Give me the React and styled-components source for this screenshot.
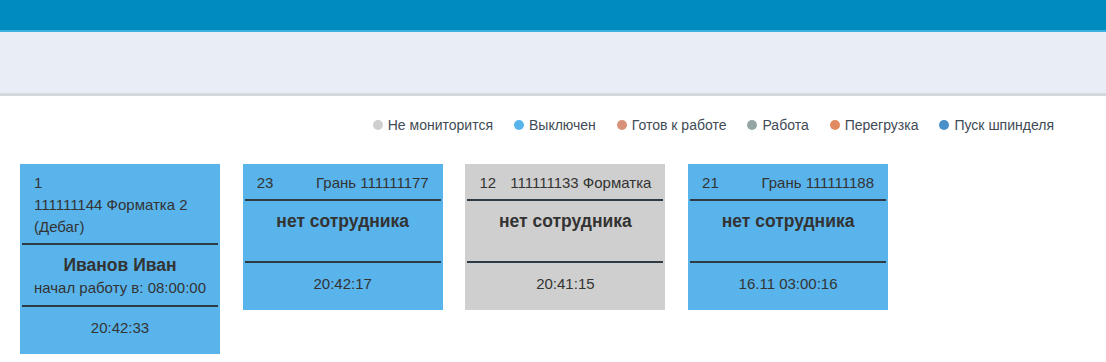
import styled, { createGlobalStyle } from "styled-components";

const GlobalStyle = createGlobalStyle`
	body {
		margin: 0;
		background: #fff;
		font-family: "Liberation Sans", Arial, sans-serif;
		color: #333;
	}
`;

const LEGEND = [
	{ id: 'none', label: 'Не мониторится', color: '#cfcfcf' },
	{ id: 'off', label: 'Выключен', color: '#5ab4ec' },
	{ id: 'ready', label: 'Готов к работе', color: '#d9927a' },
	{ id: 'work', label: 'Работа', color: '#95a5a6' },
	{ id: 'overload', label: 'Перегрузка', color: '#e38b60' },
	{ id: 'spindle', label: 'Пуск шпинделя', color: '#4a90c8' },
];

const MACHINES = [
	{ id: 1, num: '1', name: '111111144 Форматка 2 (Дебаг)', worker: 'Иванов Иван', started: '08:00:00', time: '20:42:33', status: 'off' },
	{ id: 23, num: '23', name: 'Грань 111111177', worker: null, time: '20:42:17', status: 'off' },
	{ id: 12, num: '12', name: '111111133 Форматка', worker: null, time: '20:41:15', status: 'none' },
	{ id: 21, num: '21', name: 'Грань 111111188', worker: null, time: '16.11 03:00:16', status: 'off' },
];

const STATUS_COLORS = {
	none: '#cfcfcf',
	off: '#5ab4ec',
};

const TopBar = styled.div`
	height: 30px;
	background: #008bbf;
	border-bottom: 2px solid #3fb1e0;
`;

const SubBar = styled.div`
	height: 61px;
	background: #e9edf5;
	border-bottom: 3px solid #d3d9dc;
`;

const Legend = styled.ul`
	display: flex;
	justify-content: flex-end;
	gap: 21px;
	margin: 0;
	padding: 20px 52px 0 0;
	list-style: none;
	font-size: 14px;
	color: #3f4b55;
`;

const LegendItem = styled.li`
	display: flex;
	align-items: center;
	gap: 5px;
	line-height: 18px;

	&::before {
		content: '';
		width: 10px;
		height: 10px;
		border-radius: 50%;
		background: ${p => p.$color};
	}
`;

const Grid = styled.div`
	display: flex;
	align-items: flex-start;
	gap: 22.7px;
	padding: 30px 0 0 20px;
`;

const Card = styled.div`
	width: 200px;
	background: ${p => p.$bg};
	font-size: 15px;
	color: #333;
`;

const CardHead = styled.div`
	display: flex;
	flex-wrap: wrap;
	justify-content: space-between;
	column-gap: 8px;
	margin: 0 2px;
	padding: 8px 12px 5px;
	line-height: 22px;
	border-bottom: 2px solid #2f3b44;
`;

const CardBody = styled.div`
	margin: 0 2px;
	padding: 8px 0 6px;
	text-align: center;
	border-bottom: 2px solid #2f3b44;
`;

const Worker = styled.div`
	font-size: 17.5px;
	font-weight: bold;
	line-height: 24px;
`;

const Started = styled.div`
	line-height: 22px;
	min-height: 22px;
`;

const CardFoot = styled.div`
	padding: 10px 0 15px;
	text-align: center;
	line-height: 22px;
`;

function MachineCard({ machine }) {
	return (
		<Card $bg={STATUS_COLORS[machine.status]}>
			<CardHead>
				<span>{machine.num}</span>
				<span>{machine.name}</span>
			</CardHead>
			<CardBody>
				<Worker>{machine.worker || 'нет сотрудника'}</Worker>
				<Started>{machine.worker ? `начал работу в: ${machine.started}` : ''}</Started>
			</CardBody>
			<CardFoot>{machine.time}</CardFoot>
		</Card>
	);
}

export default function App() {
	return (
		<>
			<GlobalStyle />
			<TopBar />
			<SubBar />
			<Legend>
				{LEGEND.map(item => <LegendItem key={item.id} $color={item.color}>{item.label}</LegendItem>)}
			</Legend>
			<Grid>
				{MACHINES.map(machine => <MachineCard key={machine.id} machine={machine} />)}
			</Grid>
		</>
	);
}
